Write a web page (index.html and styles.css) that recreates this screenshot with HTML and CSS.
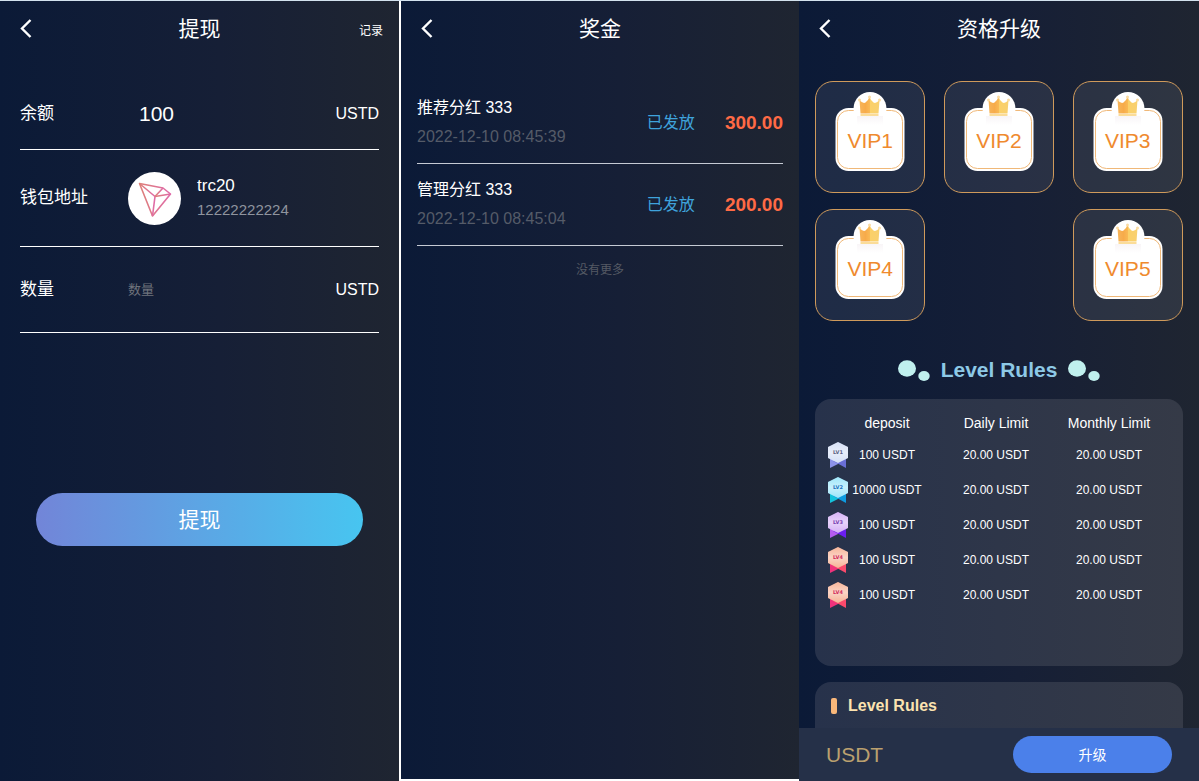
FILE: index.html
```html
<!DOCTYPE html>
<html lang="zh-CN">
<head>
    <meta charset="UTF-8">
    <meta name="viewport" content="width=device-width, initial-scale=1.0">
    <title>提现</title>
    <link rel="stylesheet" href="styles.css">
</head>
<body>
    <!-- shared shapes -->
    <svg class="sprite" aria-hidden="true">
        <defs>
            <linearGradient id="crownFill" x1="0" x2="1" y1="0" y2="0">
                <stop offset="0" stop-color="#f7b55a"/>
                <stop offset="0.3" stop-color="#f7ab4a"/>
                <stop offset="0.5" stop-color="#f9b854"/>
                <stop offset="0.55" stop-color="#fbd068"/>
                <stop offset="1" stop-color="#f8d070"/>
            </linearGradient>
            <linearGradient id="tronLine" x1="0" x2="1" y1="0" y2="0">
                <stop offset="0" stop-color="#dd8078"/>
                <stop offset="1" stop-color="#e06aa8"/>
            </linearGradient>
            <linearGradient id="cardShade" x1="0" x2="0" y1="0" y2="1">
                <stop offset="0" stop-color="#f4eef2"/>
                <stop offset="1" stop-color="#ffffff"/>
            </linearGradient>
            <linearGradient id="shine" x1="0" x2="0" y1="0" y2="1">
                <stop offset="0" stop-color="#fff" stop-opacity="0.15"/>
                <stop offset="0.5" stop-color="#fff" stop-opacity="0.5"/>
                <stop offset="1" stop-color="#fff" stop-opacity="0.1"/>
            </linearGradient>
        </defs>
        <symbol id="back" viewBox="0 0 12 20">
            <path d="M10.500 1 L2 9.500 L10.500 18" fill="none" stroke="#fff" stroke-width="2.400"/>
        </symbol>
        <symbol id="vip" viewBox="0 0 70 80">
            <rect x="0.500" y="16" width="69" height="63" rx="13" fill="#fff"/>
            <rect x="2.500" y="18.500" width="65" height="58" rx="11" fill="none" stroke="#f0b878" stroke-width="1"/>
            <circle cx="35" cy="16.500" r="16.500" fill="#fff"/>
            <path d="M22 24 h26 v9 h-26z" fill="url(#cardShade)" opacity="0.6"/>
            <path d="M24.500 8 Q28 12 30.500 10.500 Q33 9 34.500 5 Q36 9 38.500 10.500 Q41 12 44.500 8 L43.500 21.500 H25.500z" fill="url(#crownFill)"/>
            <circle cx="24.500" cy="8" r="1.500" fill="#fbdca4"/>
            <circle cx="34.500" cy="5" r="1.500" fill="#fbdca4"/>
            <circle cx="44.500" cy="8" r="1.500" fill="#fbdca4"/>
            <rect x="25.500" y="22" width="18" height="2" fill="#fbdc98"/>
        </symbol>
        <symbol id="dots" viewBox="0 0 32 22">
            <ellipse cx="9" cy="9.500" rx="9" ry="8.300"/>
            <ellipse cx="26" cy="17" rx="5.700" ry="5"/>
        </symbol>
    </svg>

    <section class="page withdraw">
        <header class="navbar">
            <button class="back" aria-label="返回"><svg><use href="#back"/></svg></button>
            <h1>提现</h1>
            <a class="record" href="#">记录</a>
        </header>
        <form class="form">
            <div class="row">
                <span class="label">余额</span>
                <span class="balance">100</span>
                <span class="unit">USTD</span>
            </div>
            <div class="row wallet">
                <span class="label">钱包地址</span>
                <svg class="tron" viewBox="0 0 53 53">
                    <circle cx="26.500" cy="26.500" r="26.500" fill="#fff"/>
                    <g fill="none" stroke="url(#tronLine)" stroke-width="1.600" stroke-linejoin="round">
                        <path d="M11.500 11.500 L35 16 L42.500 22 L24.500 44z"/>
                        <path d="M11.500 11.500 L27 24.500 L24.500 44"/>
                        <path d="M27 24.500 L35 16"/>
                        <path d="M27 24.500 L42.500 22"/>
                    </g>
                </svg>
                <div class="address">
                    <p class="chain">trc20</p>
                    <p class="number">12222222224</p>
                </div>
            </div>
            <div class="row amount">
                <label class="label" for="amount">数量</label>
                <input type="text" id="amount" placeholder="数量">
                <span class="unit">USTD</span>
            </div>
            <button type="button" class="submit">提现</button>
        </form>
    </section>

    <section class="page bonus">
        <header class="navbar">
            <button class="back" aria-label="返回"><svg><use href="#back"/></svg></button>
            <h1>奖金</h1>
        </header>
        <ul class="list">
            <li>
                <div class="info">
                    <p>推荐分红 333</p>
                    <p class="time">2022-12-10 08:45:39</p>
                </div>
                <span class="status">已发放</span>
                <span class="money">300.00</span>
            </li>
            <li>
                <div class="info">
                    <p>管理分红 333</p>
                    <p class="time">2022-12-10 08:45:04</p>
                </div>
                <span class="status">已发放</span>
                <span class="money">200.00</span>
            </li>
        </ul>
        <p class="nomore">没有更多</p>
    </section>

    <section class="page upgrade">
        <header class="navbar">
            <button class="back" aria-label="返回"><svg><use href="#back"/></svg></button>
            <h1>资格升级</h1>
        </header>
        <div class="scroll">
            <div class="levels">
                <button class="level"><svg><use href="#vip"/></svg><span>VIP1</span></button>
                <button class="level"><svg><use href="#vip"/></svg><span>VIP2</span></button>
                <button class="level"><svg><use href="#vip"/></svg><span>VIP3</span></button>
                <button class="level"><svg><use href="#vip"/></svg><span>VIP4</span></button>
                <button class="level"><svg><use href="#vip"/></svg><span>VIP5</span></button>
            </div>
            <h2 class="title">
                <svg><use href="#dots"/></svg>
                Level Rules
                <svg><use href="#dots"/></svg>
            </h2>
            <div class="panel">
                <table class="limits">
                    <thead>
                        <tr><th class="c-icon"></th><th class="c-deposit">deposit</th><th>Daily Limit</th><th class="c-monthly">Monthly Limit</th></tr>
                    </thead>
                    <tbody>
                        <tr>
                            <td><svg class="medal lv1" viewBox="0 0 22 28"><path class="tail-l" d="M3 16 H19 L11 23 L3 27z"/><path class="tail-r" d="M19 16 V27 L6 20z"/><path class="hex" d="M11 1 L21 6 V17 L11 22 L1 17 V6z"/><path fill="url(#shine)" d="M11 1 L21 6 V17 L11 22 L1 17 V6z"/><text x="11" y="13">LV1</text></svg></td>
                            <td>100 USDT</td><td>20.00 USDT</td><td>20.00 USDT</td>
                        </tr>
                        <tr>
                            <td><svg class="medal lv2" viewBox="0 0 22 28"><path class="tail-l" d="M3 16 H19 L11 23 L3 27z"/><path class="tail-r" d="M19 16 V27 L6 20z"/><path class="hex" d="M11 1 L21 6 V17 L11 22 L1 17 V6z"/><path fill="url(#shine)" d="M11 1 L21 6 V17 L11 22 L1 17 V6z"/><text x="11" y="13">LV2</text></svg></td>
                            <td>10000 USDT</td><td>20.00 USDT</td><td>20.00 USDT</td>
                        </tr>
                        <tr>
                            <td><svg class="medal lv3" viewBox="0 0 22 28"><path class="tail-l" d="M3 16 H19 L11 23 L3 27z"/><path class="tail-r" d="M19 16 V27 L6 20z"/><path class="hex" d="M11 1 L21 6 V17 L11 22 L1 17 V6z"/><path fill="url(#shine)" d="M11 1 L21 6 V17 L11 22 L1 17 V6z"/><text x="11" y="13">LV3</text></svg></td>
                            <td>100 USDT</td><td>20.00 USDT</td><td>20.00 USDT</td>
                        </tr>
                        <tr>
                            <td><svg class="medal lv4" viewBox="0 0 22 28"><path class="tail-l" d="M3 16 H19 L11 23 L3 27z"/><path class="tail-r" d="M19 16 V27 L6 20z"/><path class="hex" d="M11 1 L21 6 V17 L11 22 L1 17 V6z"/><path fill="url(#shine)" d="M11 1 L21 6 V17 L11 22 L1 17 V6z"/><text x="11" y="13">LV4</text></svg></td>
                            <td>100 USDT</td><td>20.00 USDT</td><td>20.00 USDT</td>
                        </tr>
                        <tr>
                            <td><svg class="medal lv4" viewBox="0 0 22 28"><path class="tail-l" d="M3 16 H19 L11 23 L3 27z"/><path class="tail-r" d="M19 16 V27 L6 20z"/><path class="hex" d="M11 1 L21 6 V17 L11 22 L1 17 V6z"/><path fill="url(#shine)" d="M11 1 L21 6 V17 L11 22 L1 17 V6z"/><text x="11" y="13">LV4</text></svg></td>
                            <td>100 USDT</td><td>20.00 USDT</td><td>20.00 USDT</td>
                        </tr>
                    </tbody>
                </table>
            </div>
            <div class="panel rules">
                <h3>Level Rules</h3>
            </div>
        </div>
        <footer class="buybar">
            <span class="coin">USDT</span>
            <button class="buy">升级</button>
        </footer>
    </section>
</body>
</html>
```
FILE: styles.css
```css
* {
    box-sizing: border-box;
}
body {
    margin: 0;
    height: 100vh;
    display: grid;
    grid-template-columns: 399fr 400fr 400fr;
    border-top: 1px solid #d3e2ee;
    background: #fff;
    color: #fff;
    font-family: "Liberation Sans", "Noto Sans CJK SC", sans-serif;
    font-size: 16px;
    line-height: 24px;
}
h1, h2, h3, p, ul {
    margin: 0;
    padding: 0;
}
button, input {
    font: inherit;
    color: inherit;
    background: none;
    border: none;
    padding: 0;
}
button {
    cursor: pointer;
}
a {
    color: inherit;
    text-decoration: none;
}
.sprite {
    position: absolute;
    width: 0;
    height: 0;
}
.page {
    display: flex;
    flex-direction: column;
    min-height: 0;
    min-width: 0;
    background: linear-gradient(to right, #0b1a37, #161f36 55%, #1f2531);
}

/* navbar */
.navbar {
    display: grid;
    grid-template-columns: 1fr auto 1fr;
    align-items: center;
    height: 56px;
    flex: none;
    padding: 0 16px;
}
.back {
    justify-self: start;
    display: flex;
    padding: 0 4px;
}
.back svg {
    width: 12px;
    height: 20px;
}
.navbar h1 {
    font-size: 21px;
    font-weight: normal;
}
.record {
    justify-self: end;
    padding-top: 4px;
    font-size: 12px;
}

/* withdraw */
.form {
    display: flex;
    flex-direction: column;
    padding: 21px 20px 0;
}
.row {
    display: flex;
    align-items: center;
    height: 72px;
    border-bottom: 1px solid #fff;
}
.row.wallet {
    height: 97px;
}
.row.amount {
    height: 86px;
}
.label {
    flex: none;
    width: 108px;
    font-size: 17px;
}
.balance {
    flex: 1;
    padding-left: 11px;
    font-size: 21px;
}
.tron {
    width: 53px;
    height: 53px;
    margin-right: 16px;
}
.chain {
    font-size: 17px;
}
.number {
    font-size: 15px;
    color: #8f949e;
}
.row input {
    flex: 1;
    min-width: 0;
    font-size: 13px;
    outline: none;
}
.row input::placeholder {
    color: #6f737c;
}
.submit {
    height: 53px;
    margin: 160px 16px 0;
    border-radius: 27px;
    background: linear-gradient(to right, #7285d8, #47c5f0);
    font-size: 21px;
}

/* bonus */
.bonus {
    border-left: 2px solid #fff;
    border-bottom: 2px solid #fff;
}
.list {
    list-style: none;
    padding: 25px 16px 0;
}
.list li {
    display: flex;
    align-items: center;
    height: 82px;
    border-bottom: 1px solid #c5cad4;
}
.info {
    flex: 1;
    display: grid;
    gap: 5px;
}
.time {
    color: #555b68;
}
.status {
    color: #3fa3dc;
}
.money {
    margin-left: 30px;
    font-size: 19px;
    font-weight: bold;
    color: #ff6a45;
}
.nomore {
    padding-top: 12px;
    text-align: center;
    font-size: 12px;
    color: #555a64;
}

/* upgrade */
.scroll {
    flex: 1;
    min-height: 0;
    overflow: hidden;
    padding: 24px 16px 0;
}
.levels {
    display: flex;
    flex-wrap: wrap;
    justify-content: space-between;
    row-gap: 16px;
}
.level {
    display: grid;
    justify-items: center;
    width: 30%;
    height: 112px;
    border: 1px solid #cf9a5b;
    border-radius: 18px;
    background: rgba(255, 255, 255, 0.08);
    padding-top: 10px;
    font-size: 21px;
    color: #ef8a2e;
}
.level svg, .level span {
    grid-area: 1 / 1;
}
.level svg {
    width: 70px;
    height: 80px;
}
.level span {
    padding-top: 37px;
}
.title {
    display: flex;
    justify-content: center;
    align-items: center;
    gap: 11px;
    padding: 37px 0 17px;
    font-size: 21px;
    color: #8dc9e6;
}
.title svg {
    width: 32px;
    height: 22px;
    fill: #c0f0ee;
}
.panel {
    border-radius: 16px;
    background: linear-gradient(to right, #27324b, #353a47);
    padding: 9px 32px 54px 12px;
    margin-bottom: 16px;
}
.limits {
    width: 100%;
    table-layout: fixed;
    border-collapse: collapse;
    text-align: center;
    font-size: 12px;
}
.limits th, .limits td {
    padding: 0;
    height: 35px;
    white-space: nowrap;
}
.limits th {
    height: 29px;
    font-size: 14px;
    font-weight: normal;
}
.limits .c-icon {
    width: 22px;
}
.limits .c-deposit {
    width: 76px;
}
.limits .c-monthly {
    width: 84px;
}
.medal {
    display: block;
    width: 22px;
    height: 28px;
}
.medal text {
    font-family: "DejaVu Sans", sans-serif;
    font-size: 5px;
    font-weight: bold;
    text-anchor: middle;
}
.lv1 .hex { fill: #d0dcf6; }
.lv1 .tail-l { fill: #8c92e8; }
.lv1 .tail-r { fill: #6a6fd6; }
.lv1 text { fill: #5d6284; }
.lv2 .hex { fill: #90e2fa; }
.lv2 .tail-l { fill: #14c3dc; }
.lv2 .tail-r { fill: #0e9be0; }
.lv2 text { fill: #2272c0; }
.lv3 .hex { fill: #cfa6f5; }
.lv3 .tail-l { fill: #b45cf0; }
.lv3 .tail-r { fill: #6a1ff0; }
.lv3 text { fill: #7a3cb0; }
.lv4 .hex { fill: #f6a98a; }
.lv4 .tail-l { fill: #f0327c; }
.lv4 .tail-r { fill: #fa4a6c; }
.lv4 text { fill: #d02a5c; }
.rules {
    padding: 12px 16px 60px;
}
.rules h3 {
    display: flex;
    align-items: center;
    gap: 11px;
    font-size: 16px;
    color: #fce3b0;
}
.rules h3::before {
    content: "";
    width: 6px;
    height: 16px;
    border-radius: 2px;
    background: #f9b77a;
}
.buybar {
    flex: none;
    display: flex;
    justify-content: space-between;
    align-items: center;
    height: 53px;
    padding: 0 27px;
    background: #253048;
}
.coin {
    font-size: 21px;
    color: #bba06f;
}
.buy {
    width: 46%;
    height: 37px;
    border-radius: 19px;
    background: #4b80ea;
    font-size: 14px;
}
```
